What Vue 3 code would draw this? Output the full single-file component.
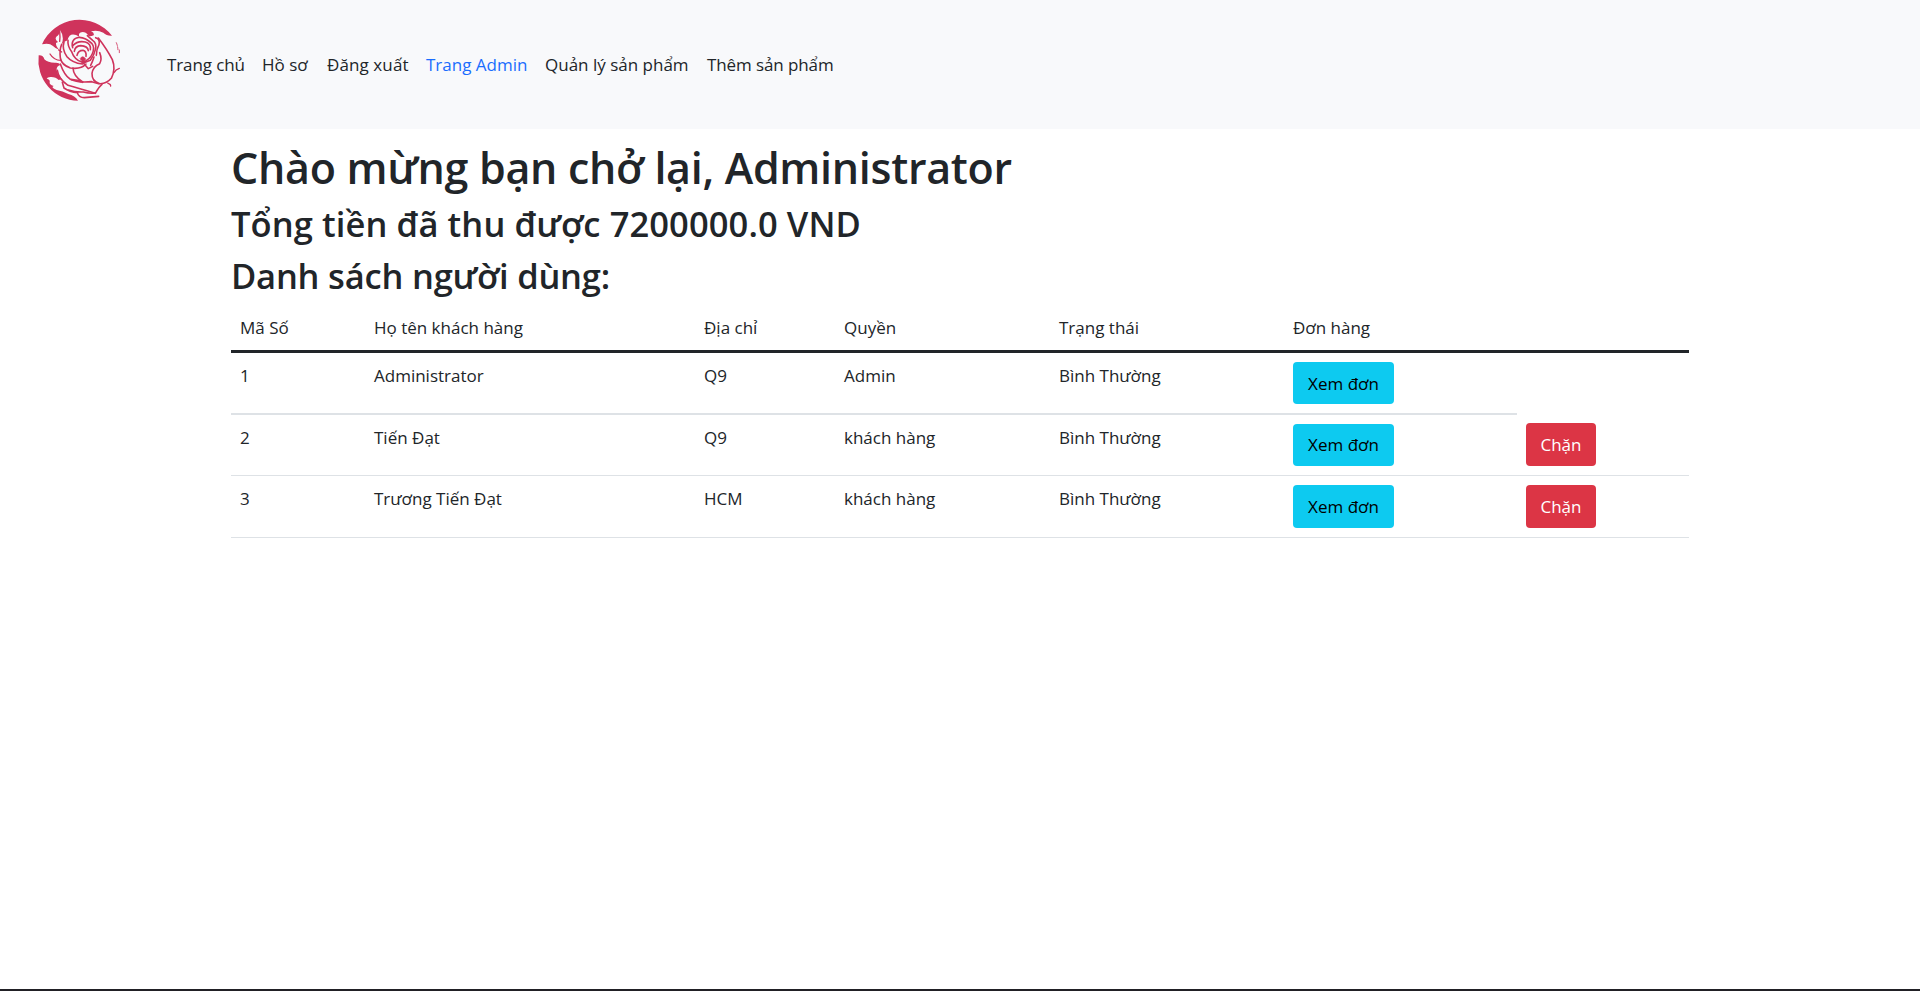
<script setup>
const links = [
  { label: 'Trang chủ', cls: 'home' },
  { label: 'Hồ sơ', cls: 'profile' },
  { label: 'Đăng xuất', cls: 'logout' },
  { label: 'Trang Admin', cls: 'admin' },
  { label: 'Quản lý sản phẩm', cls: 'manage' },
  { label: 'Thêm sản phẩm', cls: 'add' },
]
const heads = ['Mã Số', 'Họ tên khách hàng', 'Địa chỉ', 'Quyền', 'Trạng thái', 'Đơn hàng']
const users = [
  { id: 1, name: 'Administrator', address: 'Q9', role: 'Admin', status: 'Bình Thường', block: false },
  { id: 2, name: 'Tiến Đạt', address: 'Q9', role: 'khách hàng', status: 'Bình Thường', block: true },
  { id: 3, name: 'Trương Tiến Đạt', address: 'HCM', role: 'khách hàng', status: 'Bình Thường', block: true },
]
</script>

<template>
  <div class="page">
    <nav class="navbar">
      <svg class="logo" viewBox="0 0 360 330" width="120" height="110">
        <path fill="#cf335c" d="M66 103A123 123 0 0 1 276 77Q260 78 250 68Q232 59 213 64Q224 68 221 76Q204 83 202 72Q192 62 180 68Q174 74 179 81Q160 69 149 77Q142 86 143 91Q132 94 125 103Q134 79 120 61Q120 74 109 80Q103 88 114 96L108 99Q107 110 119 120Q105 115 99 108Q88 98 66 103Z" />
        <path fill="#cf335c" d="M56 136Q70 135 73 148Q84 159 108 158Q118 158 121 165Q109 168 110 180Q112 195 126 207L116 210Q107 200 91 201Q82 201 80 206Q91 208 89 216Q87 224 101 228Q91 233 110 240Q128 243 145 252Q165 257 174 272A121 121 0 0 1 56 136Z" />
        <g fill="none" stroke="#cf335c" stroke-width="4.8" stroke-linejoin="round" stroke-linecap="round">
          <path d="M125 103Q118 119 121 144Q125 165 151 174Q183 179 198 162" />
          <path stroke-width="4" d="M90 132Q102 151 122 151M116 120L125 126M119 65Q121 83 119 94" />
          <path d="M132 96Q125 118 141 140Q156 158 188 162" />
          <path d="M144 91Q142 108 155 125Q163 149 187 157Q210 149 217 131Q225 111 216 101Q197 82 178 82Q151 86 158 113" />
          <path d="M158 107Q173 91 196 96Q214 102 211 119M163 124Q165 108 182 107Q203 108 205 122M171 136Q174 121 189 121Q200 124 198 139" />
          <path fill="#cf335c" stroke-width="2" d="M181 145Q188 134 197 147L188 160Z" />
          <path d="M202 77L218 91Q231 99 226 119Q223 134 211 151L190 159L205 176L218 169" />
          <path d="M227 83Q241 87 237 104Q229 118 229 136M222 141Q218 154 212 166" />
          <path d="M235 84Q261 118 277 149Q288 177 274 205Q259 222 239 221Q215 215 216 190Q219 169 239 161Q247 148 239 128" />
          <path d="M121 162Q133 196 150 207Q171 219 215 215L236 221" />
          <path d="M159 174Q160 198 188 216M188 217Q171 208 154 209" />
          <path d="M112 181Q115 206 144 226Q180 236 226 250Q237 230 246 223" />
          <path d="M145 240Q165 247 190 246Q208 251 226 249M127 217L132 234Q149 246 172 248Q176 263 193 263L236 259" />
          <path stroke-width="4" d="M282 188Q287 178 298 175M263 219L271 224L272 228" />
          <path stroke-width="2.5" stroke-dasharray="9 4" d="M289 98Q293 106 294 121M298 120V128" />
        </g>
      </svg>
      <ul class="links">
        <li v-for="l in links" :key="l.label" :class="l.cls"><a>{{ l.label }}</a></li>
      </ul>
    </nav>
    <main class="container">
      <h1>Chào mừng bạn chở lại, Administrator</h1>
      <h2 class="total">Tổng tiền đã thu được 7200000.0 VND</h2>
      <h2 class="list">Danh sách người dùng:</h2>
      <div class="table">
        <div class="row head">
          <span v-for="h in heads" :key="h" class="cell">{{ h }}</span>
        </div>
        <div v-for="u in users" :key="u.id" class="row body" :class="{ first: u.id === 1, last: u.id === 3 }">
          <span class="cell">{{ u.id }}</span>
          <span class="cell">{{ u.name }}</span>
          <span class="cell">{{ u.address }}</span>
          <span class="cell">{{ u.role }}</span>
          <span class="cell">{{ u.status }}</span>
          <span class="cell action"><button class="btn info">Xem đơn</button></span>
          <span v-if="u.block" class="cell action block"><button class="btn danger">Chặn</button></span>
        </div>
      </div>
    </main>
    <footer class="footer"></footer>
  </div>
</template>

<style>
body { margin: 0; background: #fff; overflow: hidden; }
</style>

<style scoped>
.page {
  height: 991px;
  display: flex;
  flex-direction: column;
  font-family: "Open Sans", "Noto Sans", sans-serif;
  font-size: 17px;
  font-weight: 400;
  line-height: 26px;
  color: #212529;
  box-sizing: border-box;
}
.navbar { display: flex; height: 129px; background: #f8f9fb; flex: none; }
.logo { margin: 10px 0 0 20px; flex: none; }
.links { list-style: none; display: flex; margin: 52px 0 0 27px; padding: 0; }
.links li { white-space: nowrap; flex: none; }
.home { width: 95px; letter-spacing: -0.1px; }
.profile { width: 65px; }
.logout { width: 99px; letter-spacing: 0.1px; }
.admin { width: 119px; color: #1a6dfe; }
.manage { width: 162px; }
.add { letter-spacing: -0.1px; }
.container { width: 1458px; margin: 0 auto; flex: 1; }
h1, h2 { margin: 0; font-weight: 600; white-space: nowrap; }
h1 { font-size: 43px; line-height: 54px; padding-top: 12px; letter-spacing: -0.29px; }
h2 { font-size: 34.5px; line-height: 42px; }
.total { margin-top: 8px; letter-spacing: 0.1px; }
.list { margin-top: 10px; letter-spacing: -0.2px; }
.row { display: grid; grid-template-columns: 134px 330px 140px 215px 234px 233px 172px; }
.cell { padding: 10px 0 0 9px; box-sizing: border-box; white-space: nowrap; }
.head { height: 46px; border-bottom: 3px solid #212529; margin-top: 7px; }
.head .cell { padding-top: 11px; }
.body .cell { height: 61px; border-bottom: 1px solid #dee2e6; }
.body .action { padding-top: 9px; }
.body .block { padding-top: 8px; }
.body.first .cell { height: 62px; border-bottom-width: 2px; }
.body.last .cell { height: 62px; }
.body.last .block { padding-top: 9px; }
.btn {
  display: block;
  height: 42px;
  padding: 0;
  border: 0;
  border-radius: 4px;
  font: inherit;
}
.info { width: 101px; background: #0dcaf0; color: #000; }
.first .info { padding-top: 2px; }
.last .info { height: 43px; padding-top: 1px; }
.danger { width: 70px; height: 43px; padding-top: 1px; background: #dc3545; color: #fff; }
.footer { height: 2px; background: #212025; flex: none; }
</style>
